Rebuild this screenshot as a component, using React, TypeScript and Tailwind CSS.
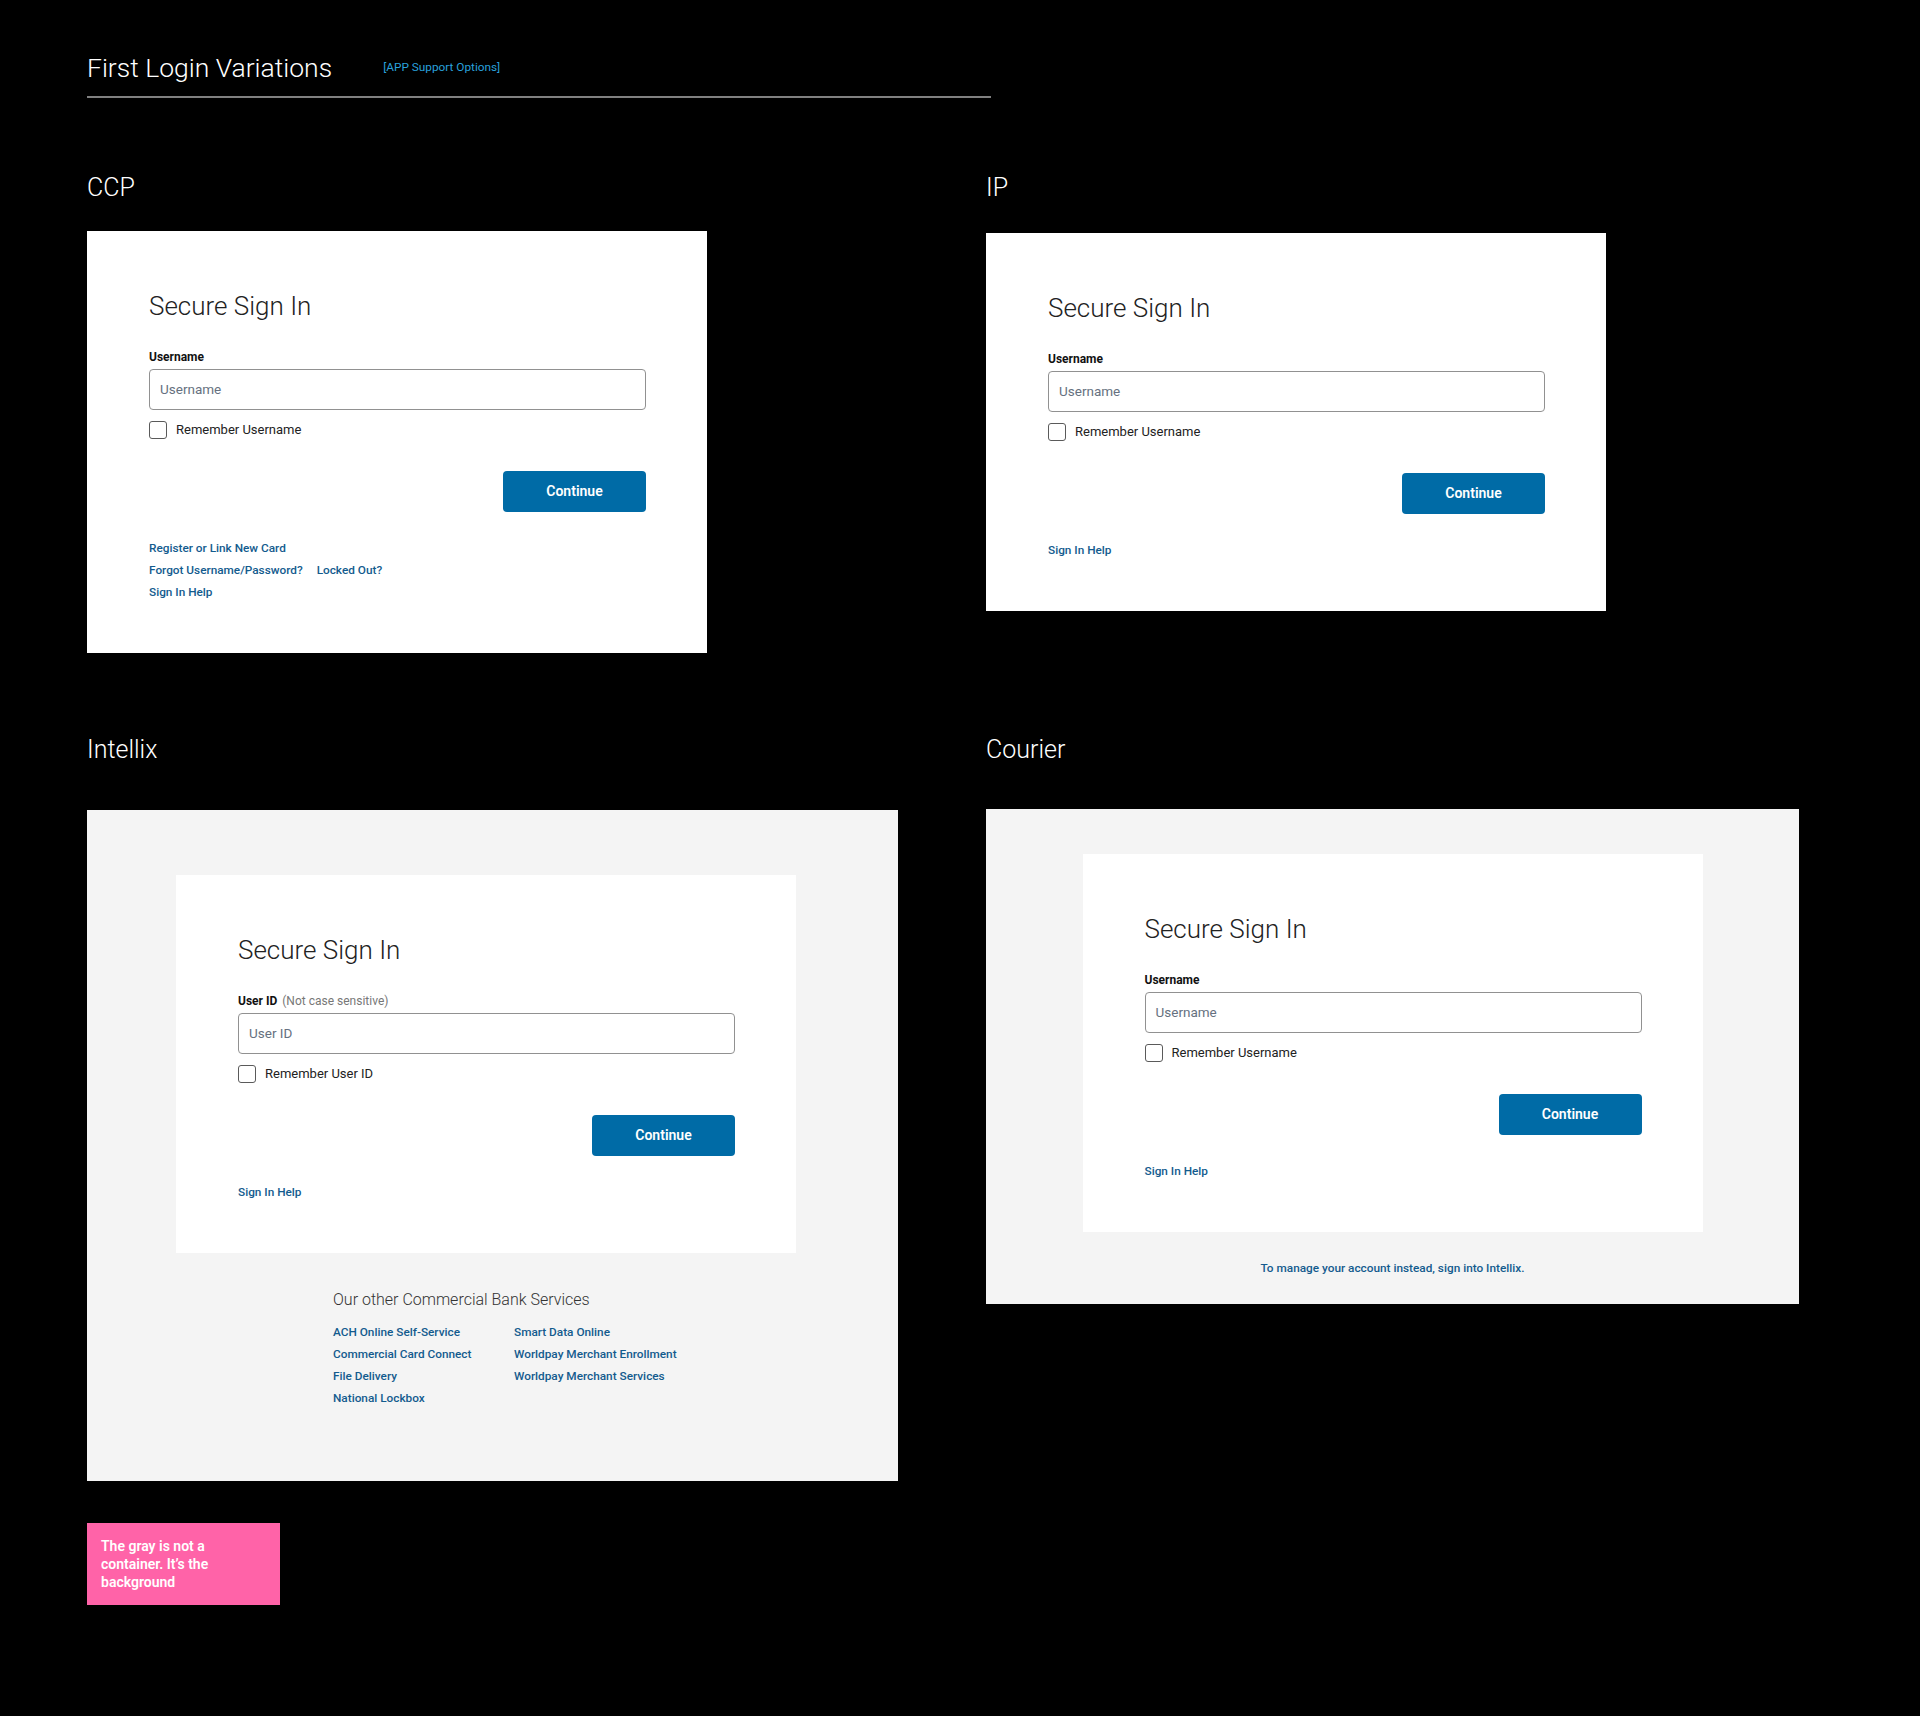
import React from "react";

interface SignInCardProps {
  label: React.ReactNode;
  placeholder: string;
  rememberText: string;
  links: React.ReactNode;
  className?: string;
}

const LINK = "text-[#135b8e] font-medium";

const SignInCard: React.FC<SignInCardProps> = ({
  label,
  placeholder,
  rememberText,
  links,
  className,
}) => {
  return (
    <div
      className={`w-[620px] bg-white pt-[59px] pb-[50px] pl-[62px] pr-[61px] flex flex-col ${
        className ?? ""
      }`}
    >
      <h2 className="text-[26px] leading-[32px] font-light text-[#222]">
        Secure Sign In
      </h2>
      <div className="mt-[27px] text-[12px] leading-[16px] text-[#111]">
        {label}
      </div>
      <div className="mt-[4px] h-[41px] w-full border border-[#919191] rounded-[4px] px-[10px] flex items-center text-[13.5px] text-[#667180]">
        {placeholder}
      </div>
      <div className="mt-[11px] h-[18px] flex items-center">
        <span className="w-[18px] h-[18px] border-[1.5px] border-[#5a5a5a] rounded-[3px] bg-white" />
        <span className="ml-[9px] text-[13px] text-[#222]">{rememberText}</span>
      </div>
      <div className="mt-[32px] flex justify-end">
        <button className="w-[143px] h-[41px] rounded-[4px] bg-[#006ba6] text-white text-[14px] font-semibold">
          Continue
        </button>
      </div>
      <div className="mt-[25px] text-[11.8px] leading-[22px] flex flex-col items-start">
        {links}
      </div>
    </div>
  );
};

const UsernameLabel = <span className="font-bold">Username</span>;

const SectionLabel: React.FC<{ children: React.ReactNode }> = ({ children }) => (
  <div className="text-[25px] leading-[32px] font-light text-white">{children}</div>
);

export default function App() {
  return (
    <div className="min-h-[1716px] w-full bg-black pl-[87px] pt-[52px] font-['Roboto',sans-serif]">
      {/* header */}
      <div className="w-[904px]">
        <div className="flex items-center h-[32px]">
          <h1 className="text-[26.5px] leading-[32px] font-light text-white">
            First Login Variations
          </h1>
          <span className="ml-[51px] text-[11.8px] text-[#29a0dc]">
            [APP Support Options]
          </span>
        </div>
        <div className="mt-[12px] h-[2px] bg-[#808080]" />
      </div>

      {/* row 1 */}
      <div className="mt-[74px] grid grid-cols-[899px_620px] items-start">
        <div>
          <SectionLabel>CCP</SectionLabel>
          <SignInCard
            className="mt-[27px]"
            label={UsernameLabel}
            placeholder="Username"
            rememberText="Remember Username"
            links={
              <>
                <span className={LINK}>Register or Link New Card</span>
                <div className="flex">
                  <span className={LINK}>Forgot Username/Password?</span>
                  <span className={`${LINK} ml-[14px]`}>Locked Out?</span>
                </div>
                <span className={LINK}>Sign In Help</span>
              </>
            }
          />
        </div>
        <div>
          <SectionLabel>IP</SectionLabel>
          <SignInCard
            className="mt-[29px]"
            label={UsernameLabel}
            placeholder="Username"
            rememberText="Remember Username"
            links={<span className={LINK}>Sign In Help</span>}
          />
        </div>
      </div>

      {/* row 2 */}
      <div className="mt-[81px] grid grid-cols-[899px_813px] items-start">
        <div>
          <SectionLabel>Intellix</SectionLabel>
          <div className="mt-[44px] w-[811px] bg-[#f4f4f4] pt-[65px] pb-[72px]">
            <SignInCard
              className="ml-[89px]"
              label={
                <>
                  <span className="font-bold">User ID</span>
                  <span className="ml-[5px] text-[#777]">(Not case sensitive)</span>
                </>
              }
              placeholder="User ID"
              rememberText="Remember User ID"
              links={<span className={LINK}>Sign In Help</span>}
            />
            <div className="ml-[246px] mt-[37px]">
              <div className="text-[16px] leading-[20px] font-light text-[#333]">
                Our other Commercial Bank Services
              </div>
              <div className="mt-[11px] flex text-[11.8px] leading-[22px]">
                <div className="w-[181px] flex flex-col">
                  <span className={LINK}>ACH Online Self-Service</span>
                  <span className={LINK}>Commercial Card Connect</span>
                  <span className={LINK}>File Delivery</span>
                  <span className={LINK}>National Lockbox</span>
                </div>
                <div className="flex flex-col">
                  <span className={LINK}>Smart Data Online</span>
                  <span className={LINK}>Worldpay Merchant Enrollment</span>
                  <span className={LINK}>Worldpay Merchant Services</span>
                </div>
              </div>
            </div>
          </div>
        </div>
        <div>
          <SectionLabel>Courier</SectionLabel>
          <div className="mt-[43px] w-[813px] bg-[#f4f4f4] pt-[45px] pb-[28px] flex flex-col items-center">
            <SignInCard
              label={UsernameLabel}
              placeholder="Username"
              rememberText="Remember Username"
              links={<span className={LINK}>Sign In Help</span>}
            />
            <div className={`mt-[28px] text-[11.8px] leading-[16px] ${LINK}`}>
              To manage your account instead, sign into Intellix.
            </div>
          </div>
        </div>
      </div>

      {/* note */}
      <div className="mt-[42px] w-[193px] bg-[#ff63a8] p-[14px] text-[14px] leading-[18px] font-semibold text-white">
        <div className="whitespace-nowrap">The gray is not a</div>
        <div className="whitespace-nowrap">container. It’s the</div>
        <div className="whitespace-nowrap">background</div>
      </div>
    </div>
  );
}
